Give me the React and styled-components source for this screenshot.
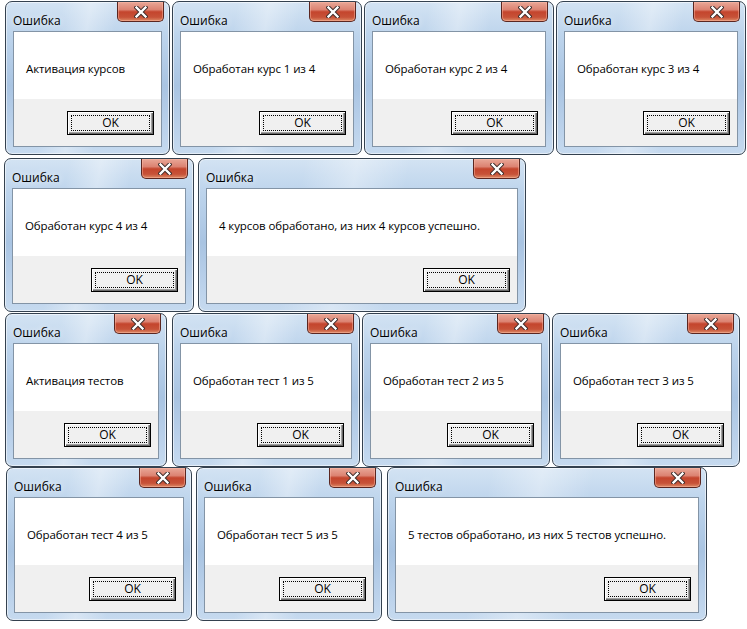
import React from 'react'
import styled, { createGlobalStyle } from 'styled-components'

const GlobalStyle = createGlobalStyle`
  html, body {
    margin: 0;
    padding: 0;
    background: #fff;
  }
  body {
    font-family: "Open Sans", "Noto Sans", "DejaVu Sans", sans-serif;
    font-size: 12px;
    color: #000;
  }
`

// rows of the collage, each dialog has a width and a left offset
const rows = [
  {
    top: 1,
    pad: 5,
    items: [
      { w: 165, ml: 0, text: 'Активация курсов' },
      { w: 190, ml: 2, text: 'Обработан курс 1 из 4' },
      { w: 190, ml: 2, text: 'Обработан курс 2 из 4' },
      { w: 190, ml: 2, text: 'Обработан курс 3 из 4' },
    ],
  },
  {
    top: 3,
    pad: 4,
    items: [
      { w: 190, ml: 0, text: 'Обработан курс 4 из 4' },
      { w: 328, ml: 4, text: '4 курсов обработано, из них 4 курсов успешно.' },
    ],
  },
  {
    top: 1,
    pad: 5,
    items: [
      { w: 162, ml: 0, text: 'Активация тестов' },
      { w: 188, ml: 5, text: 'Обработан тест 1 из 5' },
      { w: 188, ml: 2, text: 'Обработан тест 2 из 5' },
      { w: 188, ml: 2, text: 'Обработан тест 3 из 5' },
    ],
  },
  {
    top: 0,
    pad: 6,
    items: [
      { w: 186, ml: 0, text: 'Обработан тест 4 из 5' },
      { w: 186, ml: 4, text: 'Обработан тест 5 из 5' },
      { w: 320, ml: 5, text: '5 тестов обработано, из них 5 тестов успешно.' },
    ],
  },
]

function CloseGlyph() {
  return (
    <svg width="14" height="12" viewBox="0 0 14 12">
      <path
        d="M2.5 1.5 L11.5 10.5 M11.5 1.5 L2.5 10.5"
        stroke="#3b2a28"
        strokeWidth="4.2"
        strokeLinecap="square"
        fill="none"
      />
      <path
        d="M2.5 1.5 L11.5 10.5 M11.5 1.5 L2.5 10.5"
        stroke="#fff"
        strokeWidth="2.4"
        strokeLinecap="square"
        fill="none"
      />
    </svg>
  )
}

function Dialog({ w, ml, text }) {
  return (
    <Window $w={w} $ml={ml}>
      <TitleBar>
        <Title>Ошибка</Title>
        <CloseButton>
          <CloseGlyph />
        </CloseButton>
      </TitleBar>
      <Client>
        <Message>{text}</Message>
        <Footer>
          <OkButton>
            <FocusRect>OK</FocusRect>
          </OkButton>
        </Footer>
      </Client>
    </Window>
  )
}

export default function App() {
  return (
    <>
      <GlobalStyle />
      <Collage>
        {rows.map((row, i) => (
          <Row key={i} $top={row.top} $pad={row.pad}>
            {row.items.map((d, j) => (
              <Dialog key={j} {...d} />
            ))}
          </Row>
        ))}
      </Collage>
    </>
  )
}

const Collage = styled.div`
  width: 747px;
  height: 629px;
  display: flex;
  flex-direction: column;
`

const Row = styled.div`
  display: flex;
  margin-top: ${p => p.$top}px;
  padding-left: ${p => p.$pad}px;
`

const Window = styled.div`
  box-sizing: border-box;
  width: ${p => p.$w}px;
  height: 154px;
  margin-left: ${p => p.$ml}px;
  flex-shrink: 0;
  display: flex;
  flex-direction: column;
  padding: 0 7px 7px 7px;
  border: 1px solid #34414f;
  border-radius: 7px;
  box-shadow: inset 0 0 0 1px rgba(255, 255, 255, 0.55);
  background:
    linear-gradient(100deg, rgba(255, 255, 255, 0) 30%, rgba(255, 255, 255, 0.35) 45%, rgba(255, 255, 255, 0) 60%),
    linear-gradient(180deg, #d3e3f3 0%, #bdd4ec 22%, #a9c4e2 55%, #b9d0ea 80%, #c6daef 100%);
`

const TitleBar = styled.div`
  height: 29px;
  display: flex;
  justify-content: space-between;
  align-items: flex-start;
  margin-right: -2px;
`

const Title = styled.span`
  margin-top: 11px;
  line-height: 16px;
  color: #000;
  text-shadow: 0 0 6px rgba(255, 255, 255, 0.9);
`

const CloseButton = styled.div`
  width: 47px;
  height: 20px;
  box-sizing: border-box;
  display: flex;
  align-items: center;
  justify-content: center;
  border: 1px solid #5b2620;
  border-top: none;
  border-radius: 0 0 5px 5px;
  box-shadow: inset 0 0 0 1px rgba(255, 190, 170, 0.45);
  background: linear-gradient(180deg, #e9a797 0%, #dc8372 40%, #c4452d 52%, #c75238 80%, #dd8a66 100%);
`

const Client = styled.div`
  flex: 1;
  display: flex;
  flex-direction: column;
  border: 1px solid #8394a6;
`

const Message = styled.div`
  height: 67px;
  flex-shrink: 0;
  box-sizing: border-box;
  background: #fff;
  display: flex;
  align-items: center;
  padding: 6px 0 0 12px;
  font-size: 11.5px;
  letter-spacing: -0.1px;
  white-space: nowrap;
`

const Footer = styled.div`
  flex: 1;
  background: #f0f0f0;
  display: flex;
  justify-content: flex-end;
  align-items: flex-start;
  padding: 12px 7px 0 0;
`

const OkButton = styled.div`
  width: 87px;
  height: 24px;
  box-sizing: border-box;
  border: 1px solid #000;
  background: #f0f0f0;
  box-shadow:
    inset 1px 1px 0 #fff,
    inset -1px -1px 0 #696969,
    inset -2px -2px 0 #a0a0a0;
  padding: 3px;
  display: flex;
`

const FocusRect = styled.div`
  flex: 1;
  border: 1px dotted #000;
  display: flex;
  align-items: center;
  justify-content: center;
  line-height: 14px;
`
